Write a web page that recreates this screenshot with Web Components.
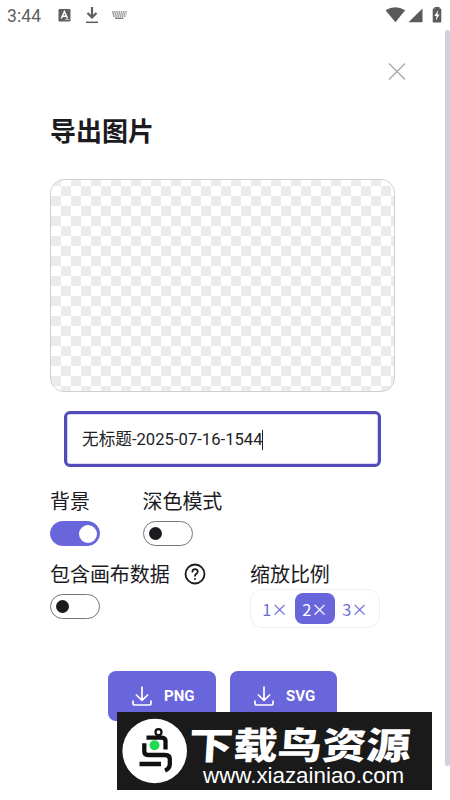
<!DOCTYPE html>
<html lang="zh-CN">
<head>
<meta charset="utf-8">
<title>导出图片</title>
<style>
html,body{margin:0;height:800px;overflow:hidden;background:#fff}
body{font-family:Roboto,"Noto Sans CJK SC",sans-serif;color:#1b1b1f}
</style>
</head>
<body>
<export-page></export-page>
<script>
const define = (name, html) => customElements.define(name, class extends HTMLElement {
  constructor() {
    super();
    this.attachShadow({ mode: 'open' }).innerHTML = html;
  }
});

define('status-bar', `
<style>
:host{display:flex;height:30px;box-sizing:border-box;padding:0 7px 0 7px;align-items:center;justify-content:space-between;color:#5f5f5f}
div{display:flex;align-items:center}
span{font-size:17.5px;line-height:20px;letter-spacing:.1px;width:51px;padding-top:2px}
svg{display:block}
</style>
<div><span>3:44</span>
<svg width="72" height="30" viewBox="58 0 72 30"><rect x="58.5" y="9" width="12" height="12.5" rx="1.2" fill="#5f5f5f"/><path d="M61.3 18.5L64.4 11.5L67.5 18.5M62.4 16.2H66.4" fill="none" stroke="#fff" stroke-width="1.5"/><path d="M65 19.5H69.5" stroke="#bbb"/>
<path d="M92 7V17M87.5 13L92 17.4L96.5 13" fill="none" stroke="#5f5f5f" stroke-width="2.2"/><path d="M86 22.3H98" stroke="#5f5f5f" stroke-width="1.5"/>
<path d="M112 12H127M112.5 14H126.5M113 16H126" stroke="#858585" stroke-width="1.3" stroke-dasharray="1.5 .7"/><path d="M115 18.2H123.5" stroke="#707070" stroke-width="1.3"/></svg></div>
<div><svg width="58" height="30" viewBox="385 0 58 30" fill="#5a5a5a"><path d="M385.5 10.3Q395.3 4.2 405.2 10.3L395.4 22.2Z"/><path d="M408.5 22.3H422.5V8.4Z"/><path d="M434.5 7H439.5V8.5H440.5Q441.3 8.5 441.3 9.3V21.5Q441.3 22.4 440.4 22.4H433.6Q432.7 22.4 432.7 21.5V9.3Q432.7 8.5 433.5 8.5H434.5Z"/><path fill="#fff" d="M438.2 10L434.4 16H436.6L435.8 20.5L439.6 14.5H437.4Z"/></svg></div>`);

define('close-icon', `
<style>:host{display:block;width:18px;height:18px}svg{display:block}</style>
<svg width="18" height="18"><path d="M1 .5L17 16.5M17 .5L1 16.5" stroke="#adadad" stroke-width="1.5" fill="none"/></svg>`);

define('canvas-preview', `
<style>:host{display:block;box-sizing:border-box;width:345px;height:213px;border:1px solid #cfcfcf;border-radius:14px;
background:repeating-conic-gradient(#ebebeb 0 25%,#fff 0 50%) 0 6px/20px 20px padding-box}</style>`);

define('name-field', `
<style>:host{display:flex;align-items:center;box-sizing:border-box;width:317px;height:56px;border:3px solid #514cb8;border-radius:6px;padding:2px 0 0 15px;line-height:24px;box-shadow:inset 0 0 0 .6px #b7b4f0;color:#222226}
i{width:1px;height:20px;background:#222;margin-left:-1px}
span{white-space:nowrap;font-size:16.65px}</style><span><slot></slot></span><i></i>`);

define('toggle-switch', `
<style>
:host{display:flex;box-sizing:border-box;align-items:center;width:50px;height:25px;border-radius:13px;border:1px solid #77777b;padding-left:5px}
i{width:13px;height:13px;border-radius:50%;background:#1b1b1f}
:host([on]){background:#6965db;border-color:#6965db;padding-left:28px}
:host([on]) i{width:18px;height:18px;background:#fff}
</style><i></i>`);

define('setting-item', `
<style>
:host{display:flex;flex-direction:column;align-items:flex-start}
label{display:flex;align-items:center;height:30px;font:20px/30px "Noto Sans CJK SC",sans-serif;white-space:nowrap;letter-spacing:-.05px;gap:14px;margin-bottom:5px}
</style><label><slot name="label"></slot></label><slot></slot>`);

define('help-icon', `
<style>:host{display:block}svg{display:block}</style>
<svg width="22" height="22" fill="none" stroke="#1b1b1f" stroke-width="1.8" stroke-linecap="round"><circle cx="11" cy="11" r="9.5"/><path d="M8.4 8.7C8.6 5.2 13.8 5.3 13.7 8.7C13.6 10.8 11 10.8 11 12.8"/><path d="M11 16V16.1" stroke-width="2"/></svg>`);

define('scale-picker', `
<style>:host{display:flex;box-sizing:border-box;width:130px;height:39px;border:1px solid #eeeefa;border-radius:12px;padding:3px 4px}
</style><slot></slot>`);

define('scale-option', `
<style>:host{display:flex;flex:1;align-items:center;justify-content:center;border-radius:8px;color:#706cd5;font:16.5px/30px "Noto Sans CJK SC",sans-serif;height:31px;letter-spacing:-.2px}
:host([selected]){background:#6965db;color:#fff}</style><slot></slot>`);

define('export-button', `
<style>:host{display:flex;box-sizing:border-box;height:50px;background:#6965db;border-radius:8px;color:#fff;align-items:center;padding-left:24px;gap:12px;font:700 15px/20px Roboto,sans-serif}
svg{display:block}</style>
<svg width="20" height="20" fill="none" stroke="#fff" stroke-width="1.7" stroke-linecap="round" stroke-linejoin="round"><path d="M10 1V14M4.4 9L10 14.4L15.6 9M1 15V17.2Q1 19 2.8 19H17.2Q19 19 19 17.2V15"/></svg><span><slot></slot></span>`);

define('site-banner', `
<style>
:host{display:flex;box-sizing:border-box;width:315px;height:78px;background:#1a1a1a;color:#fff;padding-left:5px;align-items:center}
svg{display:block;flex:none}
div{display:flex;flex-direction:column;margin-left:2px}
b{font:900 37px/44px "Noto Sans CJK SC",sans-serif;white-space:nowrap;transform-origin:0 50%;transform:scaleX(1.2) skewX(-3deg);height:44px;margin-top:6px}
span{font:22.35px/24px "Liberation Sans",sans-serif;margin-left:14px;white-space:nowrap;margin-top:-1px}
</style>
<svg width="65" height="66" viewBox="122 719 65 66"><circle cx="154.7" cy="752" r="32.3" fill="#fff"/>
<g fill="none" stroke="#101010" stroke-width="4.3" stroke-linejoin="round"><circle cx="158.5" cy="733.2" r="3" stroke-width="2.2"/><path d="M146.5 738.6H161Q165.5 738.6 165.5 742V750.5M144.3 744.3V752.5Q144.3 756 148 756H165Q169.8 756 169.8 760V765Q169.8 769.5 165 771.5M139.5 765H161"/></g><circle cx="154.5" cy="746.3" r="5" fill="#20dc50"/></svg>
<div><b>下载鸟资源</b><span>www.xiazainiao.com</span></div>`);

define('export-page', `
<style>
:host{display:block;position:relative;width:450px;height:800px;background:#fff;overflow:hidden}
main{display:flex;flex-direction:column;align-items:flex-start;padding:33px 0 0 50px;width:400px;box-sizing:border-box}
close-icon{margin-left:338px}
h1{font:700 26px/38px "Noto Sans CJK SC",sans-serif;margin:30px 0 30px}
name-field{margin:19px 0 18px 14px}
.row{display:flex}
.first{gap:42.5px;height:73px;margin-top:1px}
.first setting-item:first-child{width:50px}
.second{width:330px;justify-content:space-between;height:70px}
.buttons{display:flex;gap:14px;margin:42px 0 0 58px}
.scroll{position:absolute;right:0;top:30px;width:5px;height:736px;border-radius:3px;background:#ced2dc}
site-banner{position:absolute;left:117px;top:712px}
</style>
<status-bar></status-bar>
<main>
<close-icon></close-icon>
<h1>导出图片</h1>
<canvas-preview></canvas-preview>
<name-field>无标题-2025-07-16-1544</name-field>
<div class="row first">
<setting-item><span slot="label">背景</span><toggle-switch on></toggle-switch></setting-item>
<setting-item><span slot="label">深色模式</span><toggle-switch></toggle-switch></setting-item>
</div>
<div class="row second">
<setting-item><span slot="label">包含画布数据</span><help-icon slot="label"></help-icon><toggle-switch></toggle-switch></setting-item>
<setting-item><span slot="label">缩放比例</span><scale-picker style="margin-top:-5px"><scale-option>1×</scale-option><scale-option selected>2×</scale-option><scale-option>3×</scale-option></scale-picker></setting-item>
</div>
<div class="buttons"><export-button style="width:108px">PNG</export-button><export-button style="width:107px">SVG</export-button></div>
</main>
<div class="scroll"></div>
<site-banner></site-banner>`);
</script>
</body>
</html>
